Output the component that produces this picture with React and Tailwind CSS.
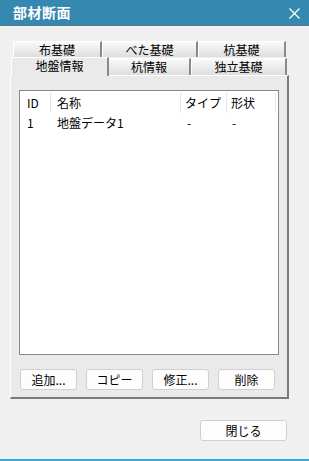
const font = { fontFamily: '"Noto Sans CJK JP", "Liberation Sans", sans-serif' };

function BackTab({ label, w }) {
  return (
    <div
      className={`h-[16px] flex items-center justify-center text-[12px] leading-none text-black bg-gradient-to-b from-[#fafafa] to-[#dedede] border-t border-l border-white border-r-2 border-r-[#8a8a8a] ${w}`}
    >
      {label}
    </div>
  );
}

function Btn({ label, w = 'w-[57px]' }) {
  return (
    <button className={`h-[21px] ${w} bg-[#fdfdfd] border border-[#cfcfcf] rounded-[3px] text-[12px] leading-none text-black flex items-center justify-center`}>
      {label}
    </button>
  );
}

export default function App() {
  const rows = [{ id: '1', name: '地盤データ1', type: '-', shape: '-' }];

  return (
    <div className="w-[309px] h-[461px] bg-[#f0f0f0] flex flex-col overflow-hidden" style={font}>
      <div className="h-[26px] shrink-0 bg-[#3588b0] border-b border-[#5a7a8a] flex items-center justify-between pl-[13px] pr-[9px]">
        <span className="text-white text-[14px] font-bold tracking-[0.5px]">部材断面</span>
        <svg width="11" height="11" viewBox="0 0 11 11" className="mt-[1px]">
          <path d="M0.5 0.5 L10.5 10.5 M10.5 0.5 L0.5 10.5" stroke="white" strokeWidth="1.2" />
        </svg>
      </div>

      <div className="flex ml-[13px] mt-[15px]">
        <BackTab label="布基礎" w="w-[89px]" />
        <BackTab label="べた基礎" w="w-[96px]" />
        <BackTab label="杭基礎" w="w-[88px]" />
      </div>

      <div className="flex items-end ml-[11px] h-[18px]">
        <div className="w-[98px] h-[19px] -mb-[1px] bg-[#eaeaea] border-t border-l border-white border-r-2 border-r-[#8a8a8a] flex items-start justify-center pt-[2px] text-[12px] leading-none relative z-10">
          地盤情報
        </div>
        <div className="w-[82px] h-[17px] bg-gradient-to-b from-[#fafafa] to-[#dedede] border-t border-white border-r-2 border-r-[#8a8a8a] flex items-center justify-center text-[12px] leading-none">
          杭情報
        </div>
        <div className="w-[96px] h-[17px] bg-gradient-to-b from-[#fafafa] to-[#dedede] border-t border-l border-white border-r-2 border-r-[#8a8a8a] flex items-center justify-center text-[12px] leading-none">
          独立基礎
        </div>
      </div>

      <div className="ml-[10px] w-[279px] h-[324px] bg-[#eaeaea] border-t border-l border-white border-r-2 border-b-2 border-r-[#7a7a7a] border-b-[#7a7a7a] flex flex-col pt-[14px] pl-[8px]">
        <div className="w-[260px] h-[265px] bg-white border border-[#828790]">
          <div className="flex h-[23px] items-center text-[12px] leading-none text-black">
            <div className="w-[30px] pl-[7px]">ID</div>
            <div className="w-px h-[20px] bg-[#e5e5e5]" />
            <div className="w-[129px] pl-[6px]">名称</div>
            <div className="w-px h-[20px] bg-[#e5e5e5]" />
            <div className="w-[45px] pl-[4px]">タイプ</div>
            <div className="w-px h-[20px] bg-[#e5e5e5]" />
            <div className="w-[48px] pl-[4px]">形状</div>
            <div className="w-px h-[20px] bg-[#e5e5e5]" />
          </div>
          {rows.map((r) => (
            <div key={r.id} className="flex h-[17px] items-center text-[12px] leading-none text-black">
              <div className="w-[31px] pl-[7px]">{r.id}</div>
              <div className="w-[130px] pl-[6px]">{r.name}</div>
              <div className="w-[46px] pl-[6px]">{r.type}</div>
              <div className="w-[48px] pl-[5px]">{r.shape}</div>
            </div>
          ))}
        </div>
        <div className="flex gap-[9px] mt-[14px] ml-[1px]">
          <Btn label="追加..." />
          <Btn label="コピー" />
          <Btn label="修正..." />
          <Btn label="削除" />
        </div>
      </div>

      <div className="flex justify-end pr-[22px] mt-[21px]">
        <Btn label="閉じる" w="w-[87px]" />
      </div>

      <div className="mt-auto h-[2px] bg-[#3aa4d6]" />
    </div>
  );
}
